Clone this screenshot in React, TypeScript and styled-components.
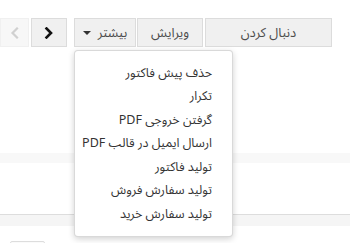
import React from "react";
import styled, { createGlobalStyle } from "styled-components";

const FONT = `"Noto Sans Arabic", "DejaVu Sans", "Liberation Sans", sans-serif`;

const Global = createGlobalStyle`
  html, body {
    margin: 0;
    padding: 0;
    background: #ffffff;
    width: 350px;
    height: 243px;
    overflow: hidden;
  }
  body {
    font-family: ${FONT};
    font-size: 12px;
    font-stretch: condensed;
    color: #4c4c4c;
  }
`;

const Page = styled.div`
  direction: rtl;
  position: relative;
  width: 350px;
  height: 243px;
  overflow: hidden;
`;

const Toolbar = styled.div`
  display: flex;
  align-items: flex-start;
  padding: 18px 18px 0 0;
  height: 29px;
`;

const Button = styled.button<{ $w: number; $gap?: number }>`
  box-sizing: border-box;
  width: ${(p) => p.$w}px;
  height: 29px;
  margin: 0 0 0 ${(p) => p.$gap ?? 0}px;
  padding: 0;
  display: flex;
  align-items: center;
  justify-content: center;
  gap: 7px;
  background: #f0f0f0;
  border: 1px solid #dcdcdc;
  border-radius: 0;
  color: #4c4c4c;
  font-family: ${FONT};
  font-stretch: condensed;
  font-size: 13px;
  line-height: 16px;
  cursor: pointer;
`;

const NavButton = styled.button<{ $w: number; $disabled?: boolean; $gap?: number }>`
  box-sizing: border-box;
  width: ${(p) => p.$w}px;
  height: 29px;
  margin: 0 0 0 ${(p) => p.$gap ?? 0}px;
  padding: 0;
  display: flex;
  align-items: center;
  justify-content: center;
  background: ${(p) => (p.$disabled ? "#f7f7f7" : "#f0f0f0")};
  border: 1px solid ${(p) => (p.$disabled ? "#f0f0f0" : "#dcdcdc")};
  border-radius: 0;
`;

const DropdownWrap = styled.div<{ $gap: number }>`
  position: relative;
  margin-left: ${(p) => p.$gap}px;
`;

const Caret = styled.span`
  width: 0;
  height: 0;
  border-left: 4px solid transparent;
  border-right: 4px solid transparent;
  border-top: 4px solid #333;
  margin-top: 1px;
`;

const Menu = styled.ul`
  position: absolute;
  top: calc(100% + 3px);
  left: 0;
  box-sizing: border-box;
  width: 159px;
  margin: 0;
  padding: 10px 0;
  list-style: none;
  background: #ffffff;
  border: 1px solid rgba(0, 0, 0, 0.15);
  border-radius: 4px;
  box-shadow: 0 2px 6px rgba(0, 0, 0, 0.18);
  z-index: 10;
`;

const MenuItem = styled.li`
  height: 23.5px;
  display: flex;
  align-items: center;
  padding: 0 20px;
  white-space: nowrap;
  color: #333333;
  font-size: 12.5px;
  line-height: 16px;
`;

const Sheet = styled.div`
  margin-top: 106px;
  display: flex;
  flex-direction: column;
`;

const Band = styled.div<{ $h: number; $bg: string }>`
  height: ${(p) => p.$h}px;
  background: ${(p) => p.$bg};
`;

const Rule = styled.div`
  height: 1px;
  background: #dddddd;
`;

const Gap = styled.div<{ $h: number }>`
  height: ${(p) => p.$h}px;
`;

const Footer = styled.div`
  display: flex;
  justify-content: flex-end;
  padding-left: 10px;
`;

const MiniBox = styled.div`
  width: 35px;
  height: 20px;
  box-sizing: border-box;
  border: 1px solid #dddddd;
  border-radius: 2px;
  background: #fafafa;
`;

const Chevron = ({ dir, color }: { dir: "left" | "right"; color: string }) => (
  <svg width="10" height="12" viewBox="0 0 10 12">
    {dir === "right" ? (
      <polyline points="2.5,1.5 7,6 2.5,10.5" fill="none" stroke={color} strokeWidth="2.6" strokeLinecap="square" />
    ) : (
      <polyline points="7,1.5 2.5,6 7,10.5" fill="none" stroke={color} strokeWidth="2.2" strokeLinecap="square" />
    )}
  </svg>
);

const items = [
  "حذف پیش فاکتور",
  "تکرار",
  "گرفتن خروجی PDF",
  "ارسال ایمیل در قالب PDF",
  "تولید فاکتور",
  "تولید سفارش فروش",
  "تولید سفارش خرید",
];

export default function App() {
  return (
    <Page>
      <Global />
      <Toolbar>
        <Button $w={127} $gap={2}>دنبال کردن</Button>
        <Button $w={66} $gap={1}>ویرایش</Button>
        <DropdownWrap $gap={7}>
          <Button $w={62} $gap={0}>
            بیشتر <Caret />
          </Button>
          <Menu>
            {items.map((t) => (
              <MenuItem key={t}>{t}</MenuItem>
            ))}
          </Menu>
        </DropdownWrap>
        <NavButton $w={36} $gap={2}>
          <Chevron dir="right" color="#111" />
        </NavButton>
        <NavButton $w={29} $disabled>
          <Chevron dir="left" color="#d0d0d0" />
        </NavButton>
      </Toolbar>
      <Sheet>
        <Band $h={10} $bg="#f8f8f8" />
        <Gap $h={51} />
        <Rule />
        <Band $h={11} $bg="#f5f5f5" />
        <Gap $h={15} />
        <Footer>
          <MiniBox />
        </Footer>
      </Sheet>
    </Page>
  );
}
